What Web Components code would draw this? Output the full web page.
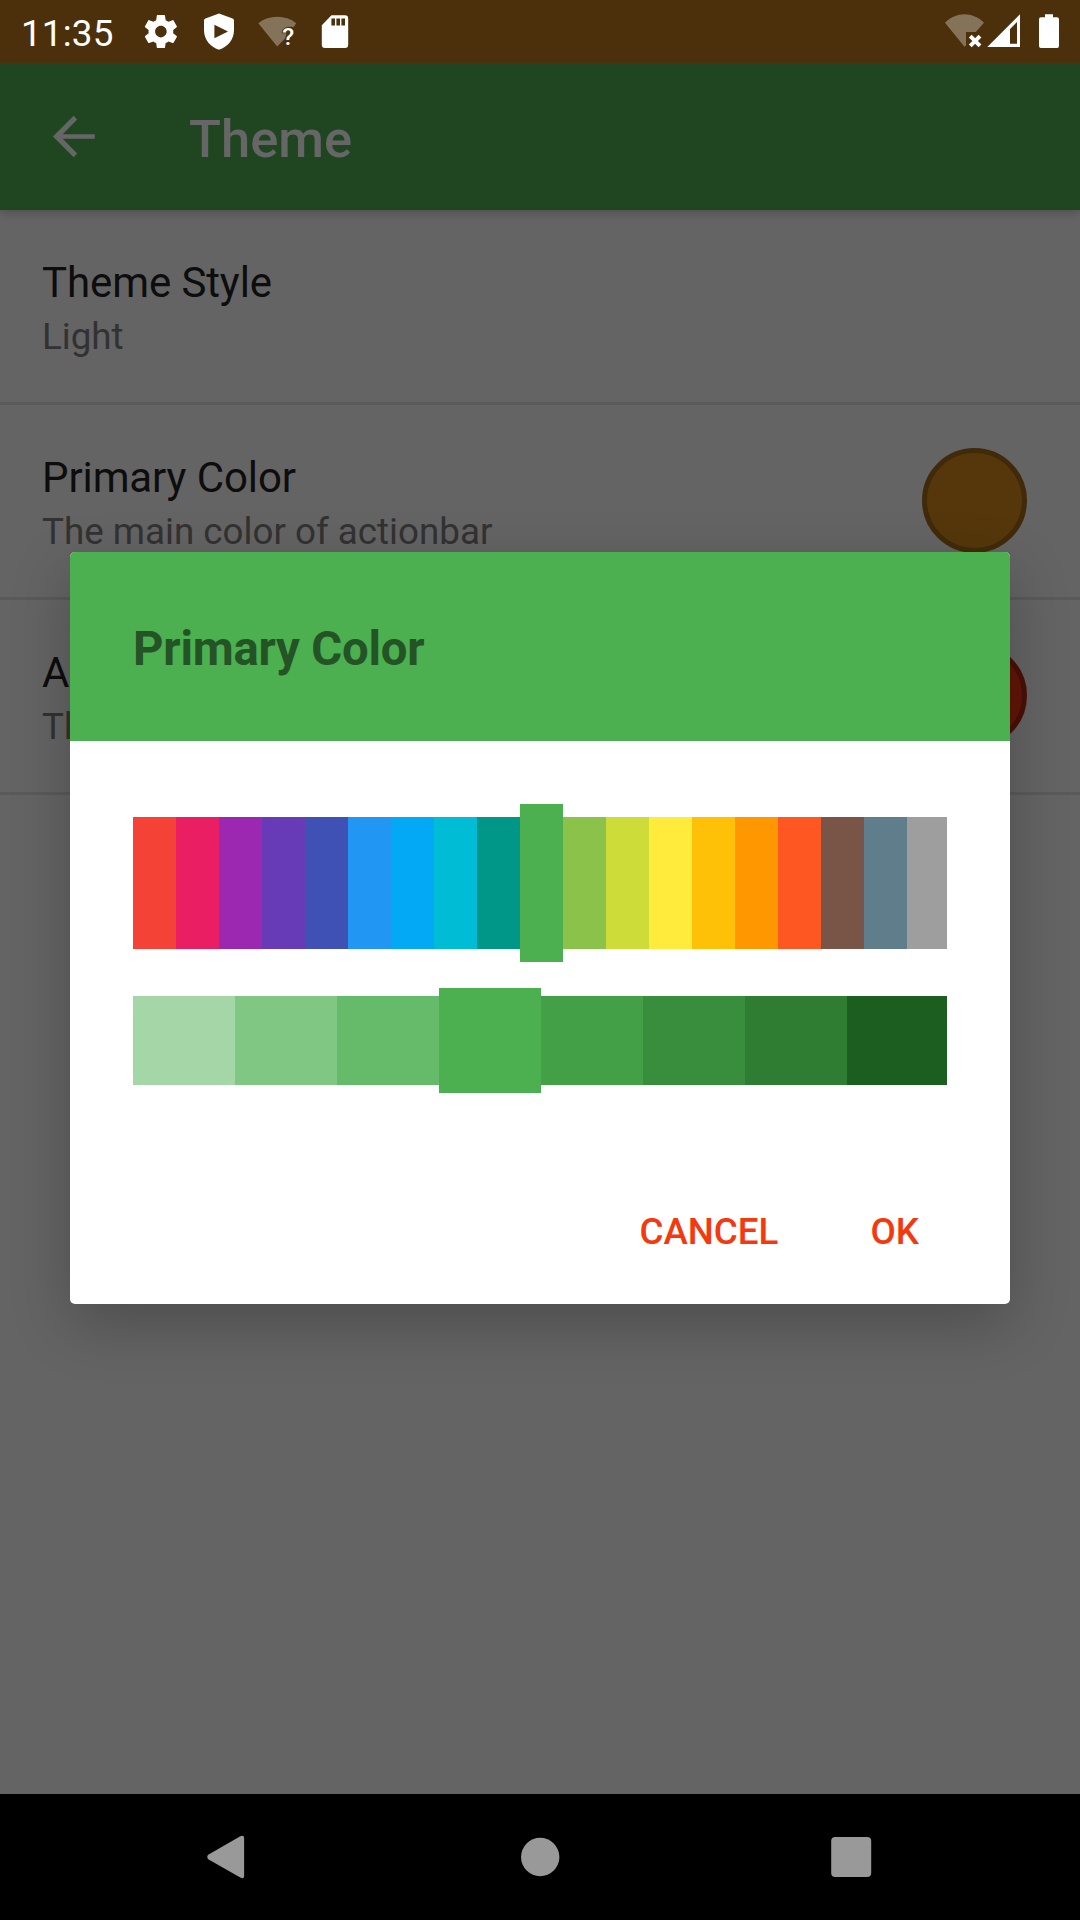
<!DOCTYPE html>
<html lang="en">
<head>
<meta charset="utf-8">
<title>Theme</title>
<style>
html,body{margin:0;height:100%;background:#646464}
body{font-family:Roboto,"Noto Sans",sans-serif;overflow:hidden}
</style>
</head>
<body>
<theme-screen></theme-screen>
<script>
const define = (name, html, setup) => customElements.define(name, class extends HTMLElement {
  constructor() {
    super();
    this.attachShadow({ mode: 'open' }).innerHTML = html;
  }
  connectedCallback() { if (setup) setup(this, this.shadowRoot); }
});

define('status-bar', `
<style>
:host{display:flex;justify-content:space-between;height:63px;background:#4b300b;color:#fff;flex:none;position:relative;z-index:1}
.side{display:flex;height:63px}
.clock{box-sizing:border-box;width:140px;padding-left:21px;font-size:36.75px;line-height:67px;letter-spacing:.2px}
.left{gap:16px}
.left .clock{margin-right:-16px}
svg{display:block;height:63px;fill:#fff}
.right{padding-right:19px}
</style>
<div class="side left">
  <div class="clock">11:35</div>
  <svg width="42" viewBox="140 0 42 63"><path transform="translate(141.1 11.8) scale(1.65)" d="M19.43 12.98c.04-.32.07-.64.07-.98s-.03-.66-.07-.98l2.11-1.65c.19-.15.24-.42.12-.64l-2-3.46c-.12-.22-.39-.3-.61-.22l-2.49 1c-.52-.4-1.08-.73-1.69-.98l-.38-2.65C14.46 2.18 14.25 2 14 2h-4c-.25 0-.46.18-.49.42l-.38 2.65c-.61.25-1.17.59-1.69.98l-2.49-1c-.23-.09-.49 0-.61.22l-2 3.46c-.13.22-.07.49.12.64l2.11 1.65c-.04.32-.07.65-.07.98s.03.66.07.98l-2.11 1.65c-.19.15-.24.42-.12.64l2 3.46c.12.22.39.3.61.22l2.49-1c.52.4 1.08.73 1.69.98l.38 2.65c.03.24.24.42.49.42h4c.25 0 .46-.18.49-.42l.38-2.65c.61-.25 1.17-.59 1.69-.98l2.49 1c.23.09.49 0 .61-.22l2-3.46c.12-.22.07-.49-.12-.64l-2.11-1.65zM12 15.5c-1.93 0-3.5-1.57-3.5-3.5s1.57-3.5 3.5-3.5 3.5 1.57 3.5 3.5-1.57 3.5-3.5 3.5z"/></svg>
  <svg width="42" viewBox="198 0 42 63"><path fill-rule="evenodd" d="M219 13.6L232.6 18.6Q234 19.1 234 20.6V30C234 39.8 227.8 46.8 219 49.8C210.200 46.800 204 39.800 204 30V20.6Q204 19.100 205.400 18.600ZM214.400 24.800V38.200L228 31.500Z"/></svg>
  <svg width="42" viewBox="256 0 42 63"><path opacity=".32" d="M258.300 23.200C269 14.700 285.500 14.700 296.200 23.200L293.500 27.200C287 25.500 281.500 28.500 281.800 33.200H286.500L285 38.500L277.200 46.400Z"/><text x="282.200" y="44.800" font-family="Roboto" font-size="24.500" font-weight="500">?</text></svg>
  <svg width="42" viewBox="314 0 42 63"><path fill-rule="evenodd" d="M331.500 15.200H345Q348.200 15.200 348.200 18.400V44.800Q348.200 48 345 48H325Q321.800 48 321.800 44.800V25.200ZM331.400 18.500V25.400H335V18.500ZM336.400 18.500V25.400H340V18.500ZM341.400 18.500V25.400H345V18.500Z"/></svg>
</div>
<div class="side right">
  <svg width="43" viewBox="943 0 43 63"><path opacity=".32" d="M945 22.800C956 11.400 973 11.400 984 22.800L975.800 32H966V45.200L964.500 46.800Z"/><path fill="none" stroke="#fff" stroke-width="4" d="M970.300 36.200L980 45.900M980 36.200L970.300 45.900"/></svg>
  <svg width="36" viewBox="986 0 36 63"><path fill-rule="evenodd" d="M1020 14.300V47H987.300ZM1010 29V43.700H1017V22Z"/></svg>
  <svg width="39" viewBox="1022 0 39 63"><path d="M1045 14.300H1053V17.200H1057Q1059 17.200 1059 19.200V46Q1059 48 1057 48H1041Q1039 48 1039 46V19.200Q1039 17.200 1041 17.200H1045Z"/></svg>
</div>`);

define('app-bar', `
<style>
:host{display:flex;align-items:center;height:147px;padding-left:42px;background:#1f4621;color:#666;flex:none;position:relative;box-shadow:0 3px 9px rgba(0,0,0,.2)}
svg{width:63px;height:63px;fill:#666;margin-right:84px}
h1{margin:0;font-size:52.5px;line-height:62px;font-weight:500;padding-top:4px}
</style>
<svg viewBox="0 0 24 24"><path d="M20.100 11.100H7.900l5.500-5.600L12.050 4.100 4.150 12l7.900 7.900 1.350-1.400-5.500-5.600h12.200z"/></svg>
<h1><slot></slot></h1>`);

define('setting-row', `
<style>
:host{display:flex;justify-content:space-between;align-items:center;box-sizing:border-box;height:195px;padding:0 53px 0 42px;border-bottom:3px solid #5a5a5a;color:#0d0d0d;flex:none}
.title{font-size:42px;line-height:50px;letter-spacing:-.1px}
.sub{font-size:36.75px;line-height:44px;color:#323232;margin-top:7px}
.dot{box-sizing:border-box;width:105px;height:105px;border-radius:50%;background:var(--fill);border:5px solid var(--ring);margin-bottom:1px}
.dot[hidden]{display:none}
.text{padding-top:4px}
</style>
<div class="text"><div class="title"><slot name="title"></slot></div><div class="sub"><slot name="summary"></slot></div></div>
<div class="dot"></div>`, (el, root) => { root.querySelector('.dot').hidden = !el.hasAttribute('swatch'); });

define('color-strip', `
<style>
:host{display:flex;align-items:center;width:814px;height:var(--tall)}
i{flex:0 0 var(--cell);height:var(--short)}
i:last-child{flex:1 1 0}
i.on{height:var(--tall)}
</style>`, (el, root) => {
  const selected = Number(el.getAttribute('selected'));
  el.getAttribute('colors').split(' ').forEach((c, n) => {
    const cell = document.createElement('i');
    cell.style.background = '#' + c;
    if (n === selected) cell.className = 'on';
    root.append(cell);
  });
});

define('flat-button', `
<style>
:host{display:block;font-size:36.75px;line-height:44px;font-weight:500;color:#f4390f}
</style><slot></slot>`);

define('color-dialog', `
<style>
:host{display:flex;flex-direction:column;width:940px;height:752px;border-radius:5px;background:#fff;overflow:hidden;box-shadow:0 20px 60px rgba(0,0,0,.23)}
header{box-sizing:border-box;height:189px;padding:69px 63px 0;background:#4caf50;color:#245326}
h2{margin:0;font-size:47.25px;line-height:56px;font-weight:700;letter-spacing:-.18px}
main{display:flex;flex-direction:column;gap:26px;padding:63px 63px 0}
footer{display:flex;justify-content:flex-end;gap:92px;padding:117px 91px 0 0}
</style>
<header><h2><slot name="title"></slot></h2></header>
<main><slot></slot></main>
<footer><slot name="action"></slot></footer>`);

define('nav-bar', `
<style>
:host{display:flex;height:126px;background:#000;flex:none;justify-content:center;gap:248px}
svg{width:63px;height:126px;fill:#999;display:block}
</style>
<svg viewBox="197.500 1794 63 126"><path d="M207.700 1854.800L239.800 1836.300Q243.600 1834.600 243.600 1838V1876Q243.600 1879.400 239.800 1877.600L207.700 1859.200Q205.800 1857 207.700 1854.800Z"/></svg>
<svg viewBox="508.500 1794 63 126"><circle cx="539.700" cy="1857" r="19.200"/></svg>
<svg viewBox="819.500 1794 63 126"><rect x="830.700" y="1837" width="40" height="40" rx="4"/></svg>`);

define('theme-screen', `
<style>
:host{display:flex;flex-direction:column;position:relative;width:1080px;height:1920px;background:#646464;overflow:hidden}
.list{flex:1;display:flex;flex-direction:column}
color-dialog{position:absolute;left:70px;top:552px}
.hues{--tall:158px;--short:132px;--cell:43px}
.shades{--tall:105px;--short:89px;--cell:102px}
</style>
<status-bar></status-bar>
<app-bar>Theme</app-bar>
<div class="list">
  <setting-row><span slot="title">Theme Style</span><span slot="summary">Light</span></setting-row>
  <setting-row swatch style="--fill:#55370b;--ring:#402a09"><span slot="title">Primary Color</span><span slot="summary">The main color of actionbar</span></setting-row>
  <setting-row swatch style="--fill:#601607;--ring:#481006"><span slot="title">A</span><span slot="summary">Th</span></setting-row>
</div>
<nav-bar></nav-bar>
<color-dialog>
  <span slot="title">Primary Color</span>
  <color-strip class="hues" selected="9" colors="f44336 e91e63 9c27b0 673ab7 3f51b5 2196f3 03a9f4 00bcd4 009688 4caf50 8bc34a cddc39 ffeb3b ffc107 ff9800 ff5722 795548 607d8b 9e9e9e"></color-strip>
  <color-strip class="shades" selected="3" colors="a5d6a7 81c784 66bb6a 4caf50 43a047 388e3c 2e7d32 1b5e20"></color-strip>
  <flat-button slot="action">CANCEL</flat-button>
  <flat-button slot="action">OK</flat-button>
</color-dialog>`);
</script>
</body>
</html>
